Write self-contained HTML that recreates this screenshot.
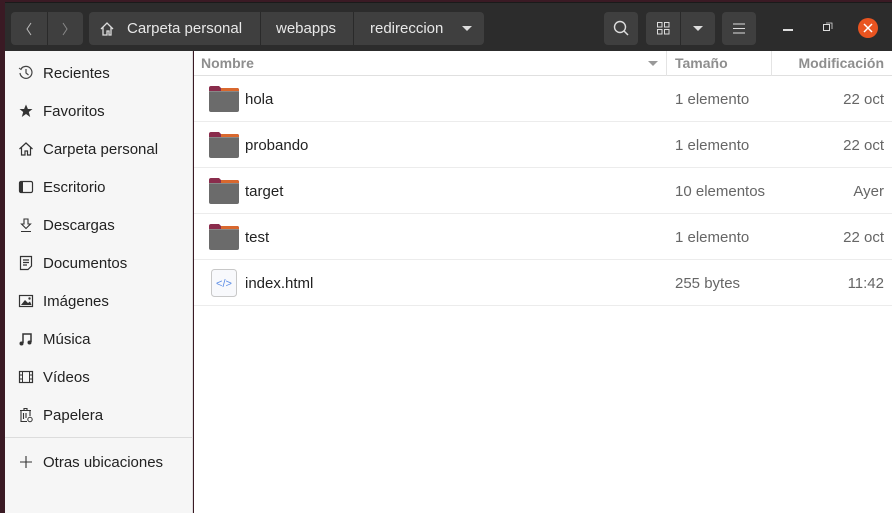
<!DOCTYPE html>
<html><head><meta charset="utf-8"><style>
*{margin:0;padding:0;box-sizing:border-box}
body{width:892px;height:513px;overflow:hidden;background:#3a1a24;font-family:"Liberation Sans",sans-serif;font-size:14px;position:relative}
.hb{position:absolute;left:5px;top:2px;width:887px;height:49px;background:#2c2c2c;border-top:1px solid #1a1a1a}
.btn{position:absolute;top:9px;height:33px;background:#3f3f3f;border-radius:4px;color:#ddd}
.sep{position:absolute;top:0;bottom:0;width:1px;background:#2a2a2a}
.bt{position:absolute;top:8px;color:#e8e8e8;font-size:15px}
.side{position:absolute;left:5px;top:51px;width:188px;height:462px;background:#f6f6f6;border-right:1px solid #dcdcdc}
.si{position:absolute;left:38px;color:#222;font-size:15px}
.ic{position:absolute;left:13px;width:16px;height:16px}
.main{position:absolute;left:194px;top:51px;right:0;bottom:0;background:#fff}
.hd{position:absolute;top:4px;color:#8e8e8e;font-weight:bold;font-size:14px}
.row{position:absolute;left:0;right:0;height:46px;border-bottom:1px solid #ececec}
.nm{position:absolute;left:51px;top:15px;color:#222;font-size:15px}
.sz{position:absolute;left:481px;top:15px;color:#666;font-size:15px}
.dt{position:absolute;right:8px;top:15px;color:#666;font-size:15px}
.fold{position:absolute;left:14px;top:9px}
</style></head><body>
<div class="hb">
 <div class="btn" style="left:6px;width:72px"><div class="sep" style="left:36px"></div>
  <svg style="position:absolute;left:13px;top:9px" width="10" height="16"><path d="M7 2L3 8L7 14" stroke="#bbb" fill="none"/></svg>
  <svg style="position:absolute;left:49px;top:9px" width="10" height="16"><path d="M3 2L7 8L3 14" stroke="#888" fill="none"/></svg>
 </div>
 <div class="btn" style="left:84px;width:395px">
  <svg style="position:absolute;left:10px;top:9px" width="16" height="16"><path d="M2 8L8 2L14 8M4 6V14H8V10H10V14H12V6" stroke="#ddd" stroke-width="1.3" fill="none"/></svg>
  <span class="bt" style="left:38px">Carpeta personal</span>
  <div class="sep" style="left:171px"></div>
  <span class="bt" style="left:187px">webapps</span>
  <div class="sep" style="left:264px"></div>
  <span class="bt" style="left:281px">redireccion</span>
  <svg style="position:absolute;left:373px;top:14px" width="10" height="6"><path d="M0 0H10L5 5Z" fill="#ddd"/></svg>
 </div>
 <div class="btn" style="left:599px;width:34px"><svg style="position:absolute;left:9px;top:8px" width="17" height="17"><circle cx="7" cy="7" r="5.5" stroke="#ddd" stroke-width="1.4" fill="none"/><path d="M11 11L15 15" stroke="#ddd" stroke-width="1.5"/></svg></div>
 <div class="btn" style="left:641px;width:69px"><div class="sep" style="left:34px"></div>
  <svg style="position:absolute;left:11px;top:10px" width="13" height="13"><g stroke="#ddd" fill="none"><rect x="0.5" y="0.5" width="4.5" height="4.5"/><rect x="7.5" y="0.5" width="4.5" height="4.5"/><rect x="0.5" y="7.5" width="4.5" height="4.5"/><rect x="7.5" y="7.5" width="4.5" height="4.5"/></g></svg>
  <svg style="position:absolute;left:47px;top:14px" width="10" height="6"><path d="M0 0H10L5 5Z" fill="#ddd"/></svg>
 </div>
 <div class="btn" style="left:717px;width:34px"><svg style="position:absolute;left:11px;top:11px" width="12" height="11"><path d="M0 1H12M0 5.5H12M0 10H12" stroke="#ddd"/></svg></div>
 <div style="position:absolute;left:778px;top:26px;width:10px;height:1.5px;background:#ddd"></div>
 <svg style="position:absolute;left:818px;top:19px" width="10" height="10"><rect x="0.5" y="2.5" width="6" height="6" stroke="#ddd" fill="none"/><path d="M3 1H9V7" stroke="#ddd" fill="none" stroke-width="0.8"/></svg>
 <div style="position:absolute;left:853px;top:15px;width:20px;height:20px;border-radius:50%;background:#e95420"><svg style="position:absolute;left:5px;top:5px" width="10" height="10"><path d="M1 1L9 9M9 1L1 9" stroke="#fff" stroke-width="1.5"/></svg></div>
</div>
<div class="side">
 <svg class="ic" style="top:14px" viewBox="0 0 16 16"><path d="M3 4A6 6 0 1 1 2 8" stroke="#444" fill="none" stroke-width="1.2"/><path d="M1 3L3 4.5L4.5 2" stroke="#444" fill="none"/><path d="M8 4V8L10.5 10" stroke="#444" fill="none" stroke-width="1.2"/></svg><span class="si" style="top:14px">Recientes</span>
 <svg class="ic" style="top:52px" viewBox="0 0 16 16"><path d="M8 1.5L9.9 6H14.5L10.8 9L12.2 14L8 11L3.8 14L5.2 9L1.5 6H6.1Z" fill="#333"/></svg><span class="si" style="top:52px">Favoritos</span>
 <svg class="ic" style="top:90px" viewBox="0 0 16 16"><path d="M1.5 8L8 2L14.5 8M3.5 6V14H7V10H9.5V14H12.5V6" stroke="#333" stroke-width="1.2" fill="none"/></svg><span class="si" style="top:90px">Carpeta personal</span>
 <svg class="ic" style="top:128px" viewBox="0 0 16 16"><rect x="1.5" y="2.5" width="13" height="11" rx="1.5" stroke="#333" stroke-width="1.2" fill="none"/><rect x="1.5" y="2.5" width="3.5" height="11" fill="#333"/></svg><span class="si" style="top:128px">Escritorio</span>
 <svg class="ic" style="top:166px" viewBox="0 0 16 16"><path d="M6 2H10V7H12.5L8 11.5L3.5 7H6Z M3 14.5H13" stroke="#333" stroke-width="1.1" fill="none"/></svg><span class="si" style="top:166px">Descargas</span>
 <svg class="ic" style="top:204px" viewBox="0 0 16 16"><path d="M2.5 1.5H13.5V11L10 14.5H2.5Z M5 5H11M5 7.5H11M5 10H9" stroke="#333" stroke-width="1.2" fill="none"/></svg><span class="si" style="top:204px">Documentos</span>
 <svg class="ic" style="top:242px" viewBox="0 0 16 16"><rect x="1.5" y="2.5" width="13" height="11" stroke="#333" stroke-width="1.2" fill="none"/><path d="M3 12L7 7L10 10L12 8.5L13.5 12Z" fill="#333"/><circle cx="11.5" cy="5.5" r="1.2" fill="#333"/></svg><span class="si" style="top:242px">Imágenes</span>
 <svg class="ic" style="top:280px" viewBox="0 0 16 16"><path d="M5 12V3H13V11" stroke="#333" stroke-width="1.5" fill="none"/><circle cx="3.5" cy="12.5" r="2" fill="#333"/><circle cx="11.5" cy="11.5" r="2" fill="#333"/></svg><span class="si" style="top:280px">Música</span>
 <svg class="ic" style="top:318px" viewBox="0 0 16 16"><rect x="1.5" y="2.5" width="13" height="11" stroke="#333" stroke-width="1.2" fill="none"/><path d="M4.5 2.5V13.5M11.5 2.5V13.5M1.5 6H4.5M1.5 10H4.5M11.5 6H14.5M11.5 10H14.5" stroke="#333"/></svg><span class="si" style="top:318px">Vídeos</span>
 <svg class="ic" style="top:356px" viewBox="0 0 16 16"><path d="M2 3.5H13M6 3.5V1.5H9V3.5M3 4V14.5H9M12 4V9M5.5 6V12M8 6V11" stroke="#333" stroke-width="1.1" fill="none"/><circle cx="12" cy="12.5" r="2.2" stroke="#333" fill="none"/></svg><span class="si" style="top:356px">Papelera</span>
 <div style="position:absolute;left:0;right:0;top:386px;height:1px;background:#dcdcdc"></div>
 <svg class="ic" style="top:403px" viewBox="0 0 16 16"><path d="M8 2V14M2 8H14" stroke="#333" stroke-width="1.1"/></svg><span class="si" style="top:403px">Otras ubicaciones</span>
</div>
<div class="main">
 <div style="position:absolute;left:0;right:0;top:0;height:25px;border-bottom:1px solid #e0e0e0">
  <span class="hd" style="left:7px">Nombre</span>
  <svg style="position:absolute;left:454px;top:10px" width="10" height="6"><path d="M0 0H10L5 5Z" fill="#999"/></svg>
  <div style="position:absolute;left:472px;top:0;height:25px;width:1px;background:#e4e4e4"></div>
  <span class="hd" style="left:481px">Tamaño</span>
  <div style="position:absolute;left:577px;top:0;height:25px;width:1px;background:#e4e4e4"></div>
  <span class="hd" style="right:8px">Modificación</span>
 </div>
 <div class="row" style="top:25px"><svg class="fold" width="32" height="28"><path d="M1 3Q1 1 3 1H11L13 3H29Q31 3 31 5V10H1Z" fill="#8a2c4c"/><path d="M13 3H29Q31 3 31 5V7H13Z" fill="#d9682e"/><rect x="1" y="6" width="30" height="21" rx="2" fill="#6b6b6b"/><rect x="1" y="6" width="30" height="1" fill="#888"/></svg><span class="nm">hola</span><span class="sz">1 elemento</span><span class="dt">22 oct</span></div>
 <div class="row" style="top:71px"><svg class="fold" width="32" height="28"><path d="M1 3Q1 1 3 1H11L13 3H29Q31 3 31 5V10H1Z" fill="#8a2c4c"/><path d="M13 3H29Q31 3 31 5V7H13Z" fill="#d9682e"/><rect x="1" y="6" width="30" height="21" rx="2" fill="#6b6b6b"/><rect x="1" y="6" width="30" height="1" fill="#888"/></svg><span class="nm">probando</span><span class="sz">1 elemento</span><span class="dt">22 oct</span></div>
 <div class="row" style="top:117px"><svg class="fold" width="32" height="28"><path d="M1 3Q1 1 3 1H11L13 3H29Q31 3 31 5V10H1Z" fill="#8a2c4c"/><path d="M13 3H29Q31 3 31 5V7H13Z" fill="#d9682e"/><rect x="1" y="6" width="30" height="21" rx="2" fill="#6b6b6b"/><rect x="1" y="6" width="30" height="1" fill="#888"/></svg><span class="nm">target</span><span class="sz">10 elementos</span><span class="dt">Ayer</span></div>
 <div class="row" style="top:163px"><svg class="fold" width="32" height="28"><path d="M1 3Q1 1 3 1H11L13 3H29Q31 3 31 5V10H1Z" fill="#8a2c4c"/><path d="M13 3H29Q31 3 31 5V7H13Z" fill="#d9682e"/><rect x="1" y="6" width="30" height="21" rx="2" fill="#6b6b6b"/><rect x="1" y="6" width="30" height="1" fill="#888"/></svg><span class="nm">test</span><span class="sz">1 elemento</span><span class="dt">22 oct</span></div>
 <div class="row" style="top:209px"><svg style="position:absolute;left:17px;top:9px" width="27" height="29"><rect x="0.5" y="0.5" width="25" height="27" rx="3" fill="#f8f9fc" stroke="#c8c8c8"/><text x="13" y="18" font-size="11" fill="#5b8de6" text-anchor="middle" font-family="Liberation Sans">&lt;/&gt;</text></svg><span class="nm">index.html</span><span class="sz">255 bytes</span><span class="dt">11:42</span></div>
</div>
</body></html>
